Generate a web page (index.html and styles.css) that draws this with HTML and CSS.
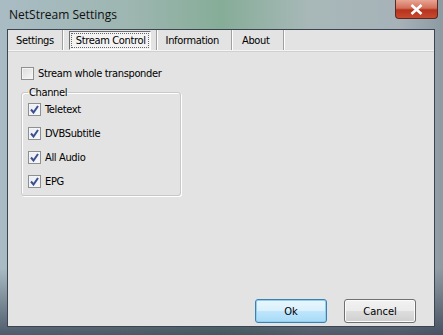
FILE: index.html
```html
<!DOCTYPE html>
<html lang="en">
    <head>
        <meta charset="UTF-8" />
        <meta name="viewport" content="width=device-width, initial-scale=1.0" />
        <title>NetStream Settings</title>
        <link rel="stylesheet" href="styles.css">
    </head>
    <body>
        <div class="window">
            <!-- 标题栏 -->
            <div class="title-bar">
                <span class="title">NetStream Settings</span>
                <div class="close-btn">
                    <svg width="13" height="11" viewBox="0 0 13 11">
                        <path d="M1.5 1 L11.5 10 M11.5 1 L1.5 10" stroke="#fff" stroke-width="2.6" />
                    </svg>
                </div>
            </div>
            <!-- 客户区 -->
            <div class="client">
                <div class="tabs">
                    <div class="tab">Settings</div>
                    <div class="tab active"><span>Stream Control</span></div>
                    <div class="tab">Information</div>
                    <div class="tab">About</div>
                </div>
                <div class="panel">
                    <label class="check">
                        <span class="box"></span>
                        Stream whole transponder
                    </label>
                    <fieldset class="group">
                        <legend>Channel</legend>
                        <label class="check">
                            <span class="box checked"><svg width="9" height="9" viewBox="0 0 9 9"><path d="M1 4.5 L3.5 7.5 L8 1" fill="none" stroke="#3b4f8c" stroke-width="2" /></svg></span>
                            Teletext
                        </label>
                        <label class="check">
                            <span class="box checked"><svg width="9" height="9" viewBox="0 0 9 9"><path d="M1 4.5 L3.5 7.5 L8 1" fill="none" stroke="#3b4f8c" stroke-width="2" /></svg></span>
                            DVBSubtitle
                        </label>
                        <label class="check">
                            <span class="box checked"><svg width="9" height="9" viewBox="0 0 9 9"><path d="M1 4.5 L3.5 7.5 L8 1" fill="none" stroke="#3b4f8c" stroke-width="2" /></svg></span>
                            All Audio
                        </label>
                        <label class="check">
                            <span class="box checked"><svg width="9" height="9" viewBox="0 0 9 9"><path d="M1 4.5 L3.5 7.5 L8 1" fill="none" stroke="#3b4f8c" stroke-width="2" /></svg></span>
                            EPG
                        </label>
                    </fieldset>
                </div>
                <div class="buttons">
                    <div class="btn default">Ok</div>
                    <div class="btn">Cancel</div>
                </div>
            </div>
        </div>
    </body>
</html>
```

FILE: styles.css
```css
* {
    margin: unset;
    padding: unset;
    box-sizing: border-box;
}
body {
    font-family: "DejaVu Sans Condensed", "Liberation Sans", sans-serif;
    font-size: 11px;
    letter-spacing: -0.35px;
    color: #000;
}
.window {
    width: 443px;
    height: 335px;
    display: flex;
    flex-direction: column;
    padding: 0 8px 8px 7px;
    background:
        linear-gradient(180deg, rgba(255, 255, 255, 0) 80%, rgba(40, 50, 70, 0.7) 100%),
        linear-gradient(90deg, #a9bcc4 0%, #9db6b0 30%, #86ad98 50%, #a8b8b8 70%, #a6b2b8 90%, #8e9aa2 100%);
}
.title-bar {
    height: 29px;
    flex-shrink: 0;
    display: flex;
    justify-content: space-between;
    align-items: flex-start;
}
.title {
    font-family: "Open Sans", "Liberation Sans", sans-serif;
    font-size: 12px;
    letter-spacing: 0;
    margin: 6px 0 0 2px;
    color: #101010;
}
.close-btn {
    width: 43px;
    height: 19px;
    margin-right: -3px;
    border: 1px solid #5a2a22;
    border-top: none;
    border-radius: 0 0 4px 4px;
    background: linear-gradient(180deg, #e8a595 0%, #d2705a 45%, #b7321d 55%, #c64a30 100%);
    display: flex;
    justify-content: center;
    align-items: center;
}
.client {
    flex: 1;
    background: #e3e3e3;
    border: 1px solid #3b4450;
    display: flex;
    flex-direction: column;
}
.tabs {
    display: flex;
    height: 21px;
    border-bottom: 1px solid #f4f4f4;
    box-shadow: 0 1px 0 #d0d0d0;
}
.tab {
    display: flex;
    align-items: center;
    padding: 1px 12px 0 9px;
    border-right: 1px solid #a0a0a0;
    box-shadow: 1px 0 0 #fff;
}
.tab:first-child {
    padding: 1px 8px 0 8px;
}
.tab.active {
    padding: 0 5px 0 6px;
}
.tab.active span {
    padding: 2px 4px 2px 6px;
    border-top: 1px solid #6e6e6e;
    border-left: 1px solid #6e6e6e;
    border-bottom: 1px solid #fff;
    border-right: 1px solid #fff;
    outline: 1px dotted #666;
    outline-offset: -3px;
    background: #f3f3f3;
}
.tab:last-child {
    padding: 1px 13px 0 10px;
}
.panel {
    flex: 1;
    padding: 15px 0 0 13px;
}
.check {
    display: flex;
    align-items: center;
    gap: 4px;
    height: 15px;
}
.box {
    width: 13px;
    height: 13px;
    border: 1px solid #8e8f8f;
    background: linear-gradient(135deg, #dcdcdc 0%, #f6f6f6 100%);
    box-shadow: inset 0 0 0 1px #f4f4f4;
    display: flex;
    justify-content: center;
    align-items: center;
}
.box.checked {
    background: linear-gradient(135deg, #e8ecf6 0%, #f8f9fc 100%);
}
.group {
    width: 160px;
    height: 110px;
    margin-top: 5px;
    border: 1px solid #c8c8c8;
    border-radius: 3px;
    box-shadow: inset 1px 1px 0 #fff, 1px 1px 0 #fff;
    padding: 3px 0 0 6px;
    display: flex;
    flex-direction: column;
    gap: 9px;
}
.group legend {
    padding: 0 1px;
}
.buttons {
    display: flex;
    justify-content: flex-end;
    gap: 17px;
    padding: 0 18px 3px 0;
}
.btn {
    width: 72px;
    height: 24px;
    display: flex;
    justify-content: center;
    align-items: center;
    border: 1px solid #707070;
    border-radius: 3px;
    background: linear-gradient(180deg, #f2f2f2 0%, #ebebeb 48%, #dddddd 52%, #cfcfcf 100%);
    box-shadow: inset 0 0 0 1px #fbfbfb;
    letter-spacing: 0;
}
.btn.default {
    border-color: #3c7fb1;
    background: linear-gradient(180deg, #eaf6fd 0%, #d9f0fc 48%, #bee6fd 52%, #a7d9f5 100%);
    box-shadow: inset 0 0 0 1px #8fd0f0;
}
```
